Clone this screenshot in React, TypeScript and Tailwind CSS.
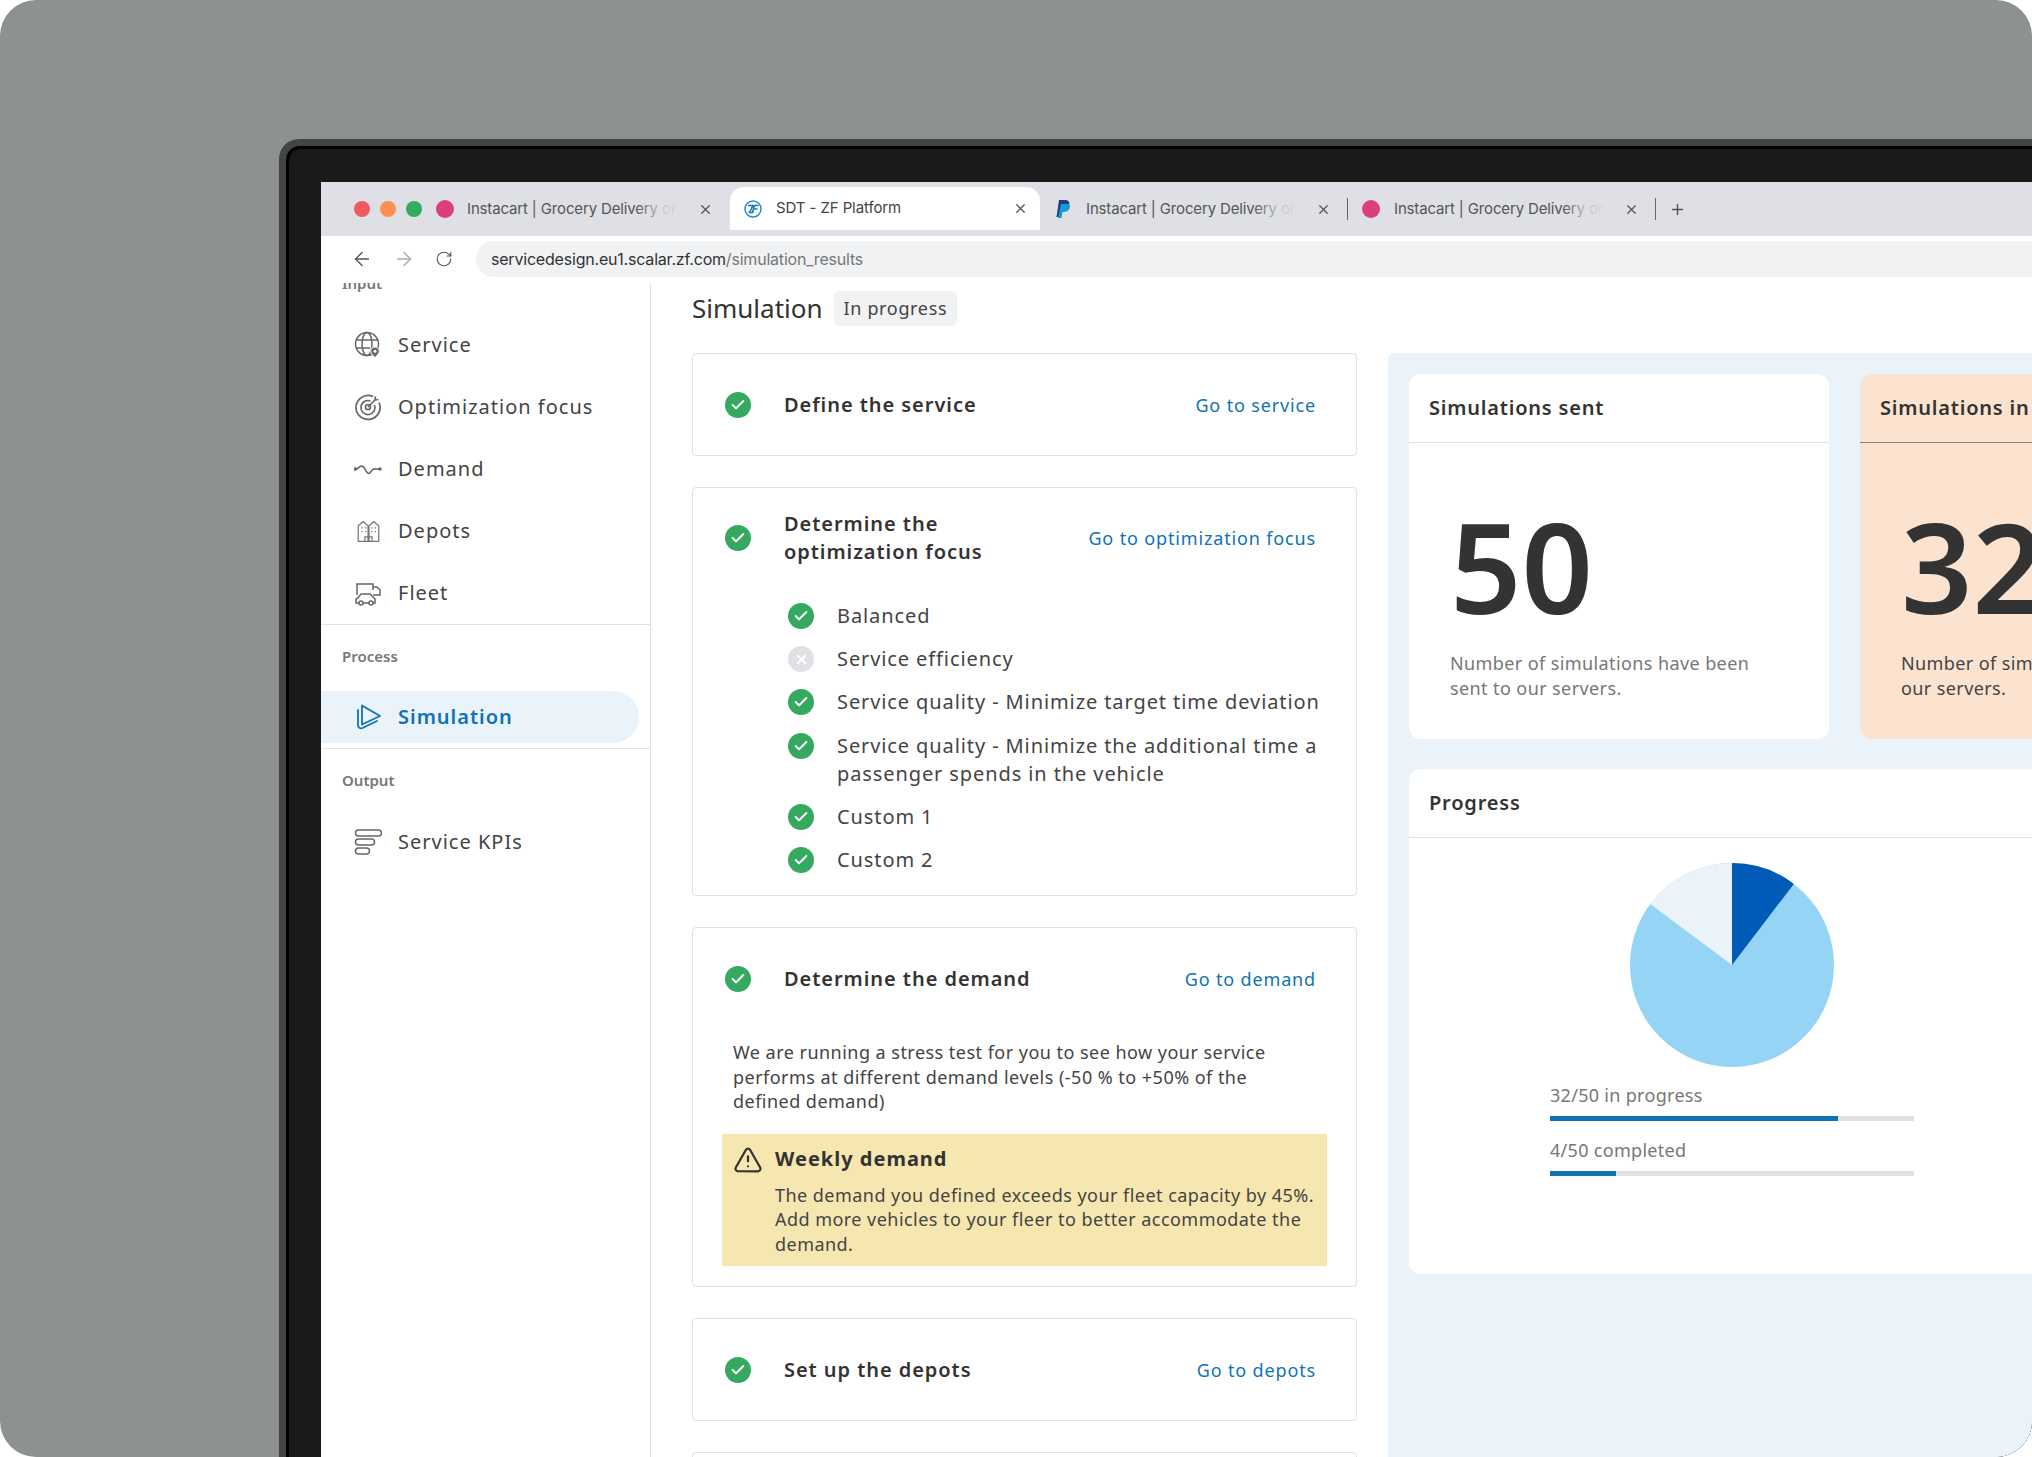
import React from "react";
import { X, Plus, ArrowLeft, ArrowRight, RotateCw, Check, TriangleAlert } from "lucide-react";

const Ok = () => (
  <span className="flex h-[26px] w-[26px] shrink-0 items-center justify-center rounded-full bg-[#35a95f]">
    <Check size={16} strokeWidth={3} className="text-white" />
  </span>
);
const No = () => (
  <span className="flex h-[26px] w-[26px] shrink-0 items-center justify-center rounded-full bg-[#dfe1e5]">
    <X size={15} strokeWidth={3} className="text-white" />
  </span>
);

const tabFont = { fontFamily: "Inter, sans-serif" };

const Tab = ({ icon }: { icon: React.ReactNode }) => (
  <div className="flex h-[44px] w-[308px] shrink-0 items-center">
    <span className="flex w-[24px] shrink-0 justify-center">{icon}</span>
    <span className="relative ml-[11px] w-[218px] overflow-hidden whitespace-nowrap text-[15px] tracking-[-0.15px] text-[#555]" style={tabFont}>
      Instacart | Grocery Delivery or in-store
      <span className="absolute inset-y-0 right-0 w-[50px] bg-gradient-to-r from-transparent via-[#dfe0e5cc] to-[#dfe0e5]" />
    </span>
    <X size={15} className="ml-[12px] shrink-0 text-[#555]" />
    <span className="ml-[16px] h-[22px] w-px shrink-0 bg-[#666]" />
  </div>
);

const Globe = () => (
  <svg width="28" height="28" viewBox="0 0 28 28" fill="none" stroke="#666" strokeWidth="1.5">
    <circle cx="13" cy="13" r="11.5" />
    <ellipse cx="13" cy="13" rx="5" ry="11.5" />
    <path d="M2 9h22M2 17h14" />
    <path d="M21 26.500c-3-2.600-4.300-4.600-4.300-6.300a4.300 4.300 0 0 1 8.600 0c0 1.700-1.300 3.700-4.300 6.300z" fill="#666" stroke="#fff" strokeWidth="1" />
    <circle cx="21" cy="20.300" r="1.500" fill="#fff" stroke="none" />
  </svg>
);
const Target = () => (
  <svg width="28" height="28" viewBox="0 0 28 28" fill="none" stroke="#666" strokeWidth="1.700">
    <path d="M19 3.500A12 12 0 1 0 25 9.500" />
    <path d="M16.500 8a7 7 0 1 0 4 4" />
    <circle cx="14" cy="14" r="2.500" />
    <path d="M14 14l7-7M21 7l.5-3.500M21 7l3.500-.5" />
  </svg>
);
const Wave = () => (
  <svg width="28" height="28" viewBox="0 0 28 28" fill="none" stroke="#666" strokeWidth="1.600">
    <path d="M1.500 14c3 0 4-3 6-3s3 2 4 4 2 3.500 3.500 3.500 2.500-4 4.500-4.500 4 .5 6.500 0" />
    <circle cx="1.500" cy="14" r="1" fill="#666" />
    <circle cx="26" cy="14" r="1" fill="#666" />
  </svg>
);
const Depot = () => (
  <svg width="25" height="25" viewBox="0 0 28 28" fill="none" stroke="#777" strokeWidth="1.400">
    <path d="M2.500 25V7.500L8 3l5.500 4.500V25M14.500 25V7.500L20 3l5.500 4.500V25M2 25h24" />
    <path d="M6 10h1.500M10 10h1.500M6 14h1.500M10 14h1.500M17 10h1.500M21 10h1.500M17 14h1.500M21 14h1.500M10 25v-5h8v5M14 20v5" />
  </svg>
);
const Truck = () => (
  <svg width="28" height="28" viewBox="0 0 28 28" fill="none" stroke="#666" strokeWidth="1.500">
    <path d="M3 16V5h16v6M19 8h4l3 3v5h-7" />
    <path d="M2 24v-4l2-1 3-4h9l4 4 1 1v4z" fill="#fff" />
    <circle cx="7" cy="24" r="2" fill="#fff" />
    <circle cx="17" cy="24" r="2" fill="#fff" />
  </svg>
);
const Play = () => (
  <svg width="28" height="28" viewBox="0 0 28 28" fill="none" stroke="#0f73b5" strokeWidth="1.800" strokeLinejoin="round" strokeLinecap="round">
    <path d="M8 2.500l18 10.500-18 8.500z" />
    <path d="M4 7v15c0 2.500 2 4 4.500 3l14.500-7" />
  </svg>
);
const Kpi = () => (
  <svg width="28" height="28" viewBox="0 0 28 28" fill="none" stroke="#666" strokeWidth="1.500">
    <rect x="1.500" y="2" width="26" height="6" rx="3" />
    <rect x="1.500" y="11" width="19" height="6" rx="3" />
    <rect x="1.500" y="20" width="14" height="6" rx="3" />
  </svg>
);

const NavItem = ({ icon, label }: { icon: React.ReactNode; label: string }) => (
  <div className="flex h-[62px] items-center pl-[33px]">
    <span className="flex w-[28px] shrink-0 justify-center">{icon}</span>
    <span className="ml-[16px] text-[20px] tracking-[1px] text-[#444]">{label}</span>
  </div>
);

const Card = ({ title, link, extra, cls }: { title: React.ReactNode; link: string; extra?: React.ReactNode; cls: string }) => (
  <div className={`rounded-[4px] border border-[#dfe1e5] pl-[32px] pr-[40px] ${cls}`}>
    <div className="flex items-center">
      <Ok />
      <div className="ml-[33px] text-[20px] font-semibold leading-[28px] tracking-[0.95px] text-[#333]">{title}</div>
      <a className="ml-auto whitespace-nowrap text-[18px] tracking-[0.85px] text-[#0f73b5]">{link}</a>
    </div>
    {extra}
  </div>
);

const Focus = ({ ok = true, children }: { ok?: boolean; children: React.ReactNode }) => (
  <div className="flex items-start gap-[23px] pl-[95px]">
    <span className="pt-[1px]">{ok ? <Ok /> : <No />}</span>
    <span className="text-[20px] leading-[28px] tracking-[0.9px] text-[#444]">{children}</span>
  </div>
);

const Stat = ({ title, num, desc, peach }: { title: string; num: string; desc: React.ReactNode; peach?: boolean }) => (
  <div className={`h-[365px] shrink-0 overflow-hidden rounded-[12px] ${peach ? "w-[500px] bg-[#fce3cf]" : "w-[420px] bg-white"}`}>
    <div className={`flex h-[69px] items-center border-b px-[20px] text-[20px] font-semibold tracking-[0.8px] text-[#333] ${peach ? "border-[#888]" : "border-[#dfe1e5]"}`}>
      {title}
    </div>
    <div className="pl-[41px] pt-[58px]">
      <div className="text-[125px] font-semibold leading-[130px] text-[#333]">{num}</div>
      <div className={`mt-[20px] text-[18px] leading-[24.500px] tracking-[0.4px] ${peach ? "text-[#444]" : "text-[#777]"}`}>{desc}</div>
    </div>
  </div>
);

const Bar = ({ label, pct, cls }: { label: string; pct: number; cls: string }) => (
  <div className={cls}>
    <div className="text-[18px] leading-[25px] tracking-[0.3px] text-[#777]">{label}</div>
    <div className="mt-[8px] h-[5px] w-[364px] bg-[#dfe1e5]">
      <div className="h-full bg-[#0f73b5]" style={{ width: `${pct}%` }} />
    </div>
  </div>
);

export default function App() {
  return (
    <div className="h-[1457px] w-[2032px] overflow-hidden bg-white" style={{ fontFamily: '"Noto Sans", sans-serif' }}>
      <div className="h-full w-full overflow-hidden rounded-[36px] bg-[#8e9191] pl-[279px] pt-[139px]">
        <div className="h-[1400px] w-[1800px] rounded-tl-[20px] bg-[#444] pl-[7px] pt-[7px]">
          <div className="h-full w-full rounded-tl-[14px] bg-black pl-[3px] pt-[3px]">
            <div className="h-full w-full rounded-tl-[12px] bg-[#1a1a1a] pl-[32px] pt-[33px]">
              <div className="h-full w-full bg-white">
                {/* tabs */}
                <div className="flex h-[54px] w-[1711px] items-start bg-[#dfe0e5] pl-[33px] pt-[5px]">
                  <div className="flex h-[44px] items-center gap-[10px]">
                    <span className="h-[16px] w-[16px] rounded-full bg-[#f0595f]" />
                    <span className="h-[16px] w-[16px] rounded-full bg-[#ff8f50]" />
                    <span className="h-[16px] w-[16px] rounded-full bg-[#33ac5f]" />
                  </div>
                  <div className="ml-[14px] w-[290px] shrink-0">
                    <div className="flex h-[44px] w-[285px] items-center">
                      <span className="h-[18px] w-[18px] shrink-0 rounded-full bg-[#dc3f7f]" />
                      <span className="relative ml-[13px] w-[219px] overflow-hidden whitespace-nowrap text-[15px] tracking-[-0.15px] text-[#555]" style={tabFont}>
                        Instacart | Grocery Delivery or in-store
                        <span className="absolute inset-y-0 right-0 w-[50px] bg-gradient-to-r from-transparent via-[#dfe0e5cc] to-[#dfe0e5]" />
                      </span>
                      <X size={15} className="ml-[12px] shrink-0 text-[#555]" />
                    </div>
                  </div>
                  <div className="ml-[4px] flex h-[43px] w-[310px] shrink-0 items-center rounded-t-[14px] bg-white pl-[14px]">
                    <svg width="18" height="18" viewBox="0 0 18 18" fill="none">
                      <circle cx="9" cy="9" r="8" stroke="#1c8fd0" strokeWidth="1.500" />
                      <path d="M4 5.500h5L5.500 12.500h4M10.500 5.500h4M10.500 9h3M9.500 12.500h-1L10.500 5.500" stroke="#1472b8" strokeWidth="1.500" />
                    </svg>
                    <span className="ml-[14px] text-[15px] tracking-[-0.1px] text-[#444]" style={tabFont}>SDT - ZF Platform</span>
                    <X size={15} className="ml-auto mr-[12px] text-[#555]" />
                  </div>
                  <div className="ml-[11px]">
                    <Tab icon={<svg width="16" height="20" viewBox="0 0 16 20"><path d="M4 1h6c4 0 5 2.500 4 5.500S10 11 7.500 11H6l-1 7H1.500z" fill="#253b80" /><path d="M6 5h6c3 0 3.500 2 2.500 4.500S11 13 8.500 13H7.500L6.500 19H3z" fill="#179bd7" /></svg>} />
                  </div>
                  <Tab icon={<span className="h-[18px] w-[18px] rounded-full bg-[#dc3f7f]" />} />
                  <Plus size={17} className="ml-[2px] mt-[14px] text-[#555]" />
                </div>
                {/* address */}
                <div className="flex h-[47px] w-[1711px] items-start pt-[5px]">
                  <div className="flex h-[36px] w-[155px] shrink-0 items-center">
                    <ArrowLeft size={22} strokeWidth={1.500} className="ml-[30px] text-[#555]" />
                    <ArrowRight size={22} strokeWidth={1.500} className="ml-[20px] text-[#aaa]" />
                    <RotateCw size={18} strokeWidth={1.500} className="ml-[20px] text-[#555]" />
                  </div>
                  <div className="flex h-[36px] flex-1 items-center rounded-l-[18px] bg-[#f1f2f4] pl-[15px] text-[16px] tracking-[-0.2px] text-[#333]" style={tabFont}>
                    servicedesign.eu1.scalar.zf.com<span className="text-[#777]">/simulation_results</span>
                  </div>
                </div>
                {/* page */}
                <div className="flex h-[1200px] w-[1711px]">
                  <aside className="h-full w-[330px] shrink-0 overflow-hidden border-r border-[#dfe1e5]">
                    <div className="-mt-[12px] h-[43px] pl-[21px] text-[15px] font-semibold leading-[24px] text-[#777]">Input</div>
                    <NavItem icon={<Globe />} label="Service" />
                    <NavItem icon={<Target />} label="Optimization focus" />
                    <NavItem icon={<Wave />} label="Demand" />
                    <NavItem icon={<Depot />} label="Depots" />
                    <NavItem icon={<Truck />} label="Fleet" />
                    <div className="h-[1px] bg-[#dfe1e5]" />
                    <div className="flex h-[66px] items-center pb-[4px] pl-[21px] text-[15px] font-semibold text-[#777]">Process</div>
                    <div className="flex h-[52px] w-[318px] items-center rounded-r-[26px] bg-[#eaf2fa] pl-[33px]">
                      <span className="flex w-[28px] justify-center"><Play /></span>
                      <span className="ml-[16px] text-[20px] font-semibold tracking-[1px] text-[#0f73b5]">Simulation</span>
                    </div>
                    <div className="mt-[5px] h-[1px] bg-[#dfe1e5]" />
                    <div className="flex h-[62px] items-center pl-[21px] text-[15px] font-semibold text-[#777]">Output</div>
                    <NavItem icon={<Kpi />} label="Service KPIs" />
                  </aside>
                  <main className="h-full w-[737px] shrink-0 overflow-hidden pl-[41px]">
                    <div className="flex h-[70px] items-start pt-[7px]">
                      <span className="text-[26px] leading-[36px] text-[#333]">Simulation</span>
                      <span className="ml-[11px] mt-[1px] flex h-[35px] items-center rounded-[6px] bg-[#f1f2f4] px-[10px] text-[18px] tracking-[0.65px] text-[#444]">In progress</span>
                    </div>
                    <div className="flex w-[665px] flex-col gap-[31px]">
                      <Card cls="h-[103px] pt-[37px]" title="Define the service" link="Go to service" />
                      <Card
                        cls="h-[409px] pt-[22px]"
                        title={<>Determine the<br />optimization focus</>}
                        link="Go to optimization focus"
                        extra={
                          <div className="-ml-[32px] -mr-[40px] mt-[36px] flex flex-col gap-[15.200px] pr-[20px]">
                            <Focus>Balanced</Focus>
                            <Focus ok={false}>Service efficiency</Focus>
                            <Focus>Service quality - Minimize target time deviation</Focus>
                            <Focus>Service quality - Minimize the additional time a passenger spends in the vehicle</Focus>
                            <Focus>Custom 1</Focus>
                            <Focus>Custom 2</Focus>
                          </div>
                        }
                      />
                      <Card
                        cls="h-[360px] pt-[37px]"
                        title="Determine the demand"
                        link="Go to demand"
                        extra={
                          <>
                            <p className="ml-[8px] mt-[47px] w-[560px] text-[18px] leading-[24.500px] tracking-[0.47px] text-[#444]">
                              We are running a stress test for you to see how your service performs at different demand levels (-50 % to +50% of the defined demand)
                            </p>
                            <div className="-ml-[3px] mt-[20px] flex h-[132px] w-[605px] gap-[12px] bg-[#f6e7b0] pl-[11px] pt-[10px]">
                              <TriangleAlert size={30} strokeWidth={1.800} className="mt-[1px] shrink-0 text-[#333]" />
                              <div className="min-w-0">
                                <div className="text-[20px] font-bold leading-[30px] tracking-[1px] text-[#333]">Weekly demand</div>
                                <p className="mt-[9px] w-[555px] text-[18px] leading-[24.500px] tracking-[0.46px] text-[#444]">
                                  The demand you defined exceeds your fleet capacity by 45%. Add more vehicles to your fleer to better accommodate the demand.
                                </p>
                              </div>
                            </div>
                          </>
                        }
                      />
                      <Card cls="h-[103px] pt-[37px]" title="Set up the depots" link="Go to depots" />
                      <div className="h-[60px] rounded-[4px] border border-[#dfe1e5]" />
                    </div>
                  </main>
                  <section className="mt-[70px] h-full flex-1 overflow-hidden rounded-tl-[6px] bg-[#eaf2fa] pl-[21px] pt-[21px]">
                    <div className="flex gap-[31px]">
                      <Stat title="Simulations sent" num="50" desc={<>Number of simulations have been<br />sent to our servers.</>} />
                      <Stat peach title="Simulations in progress" num="32" desc={<>Number of simulations sent to<br />our servers.</>} />
                    </div>
                    <div className="mt-[30px] h-[505px] w-[951px] overflow-hidden rounded-[12px] bg-white">
                      <div className="flex h-[69px] items-center border-b border-[#dfe1e5] px-[20px] text-[20px] font-semibold tracking-[0.8px] text-[#333]">Progress</div>
                      <div className="pl-[141px] pt-[25px]">
                        <svg width="204" height="204" viewBox="0 0 204 204" className="ml-[80px] block">
                          <circle cx="102" cy="102" r="102" fill="#96d4f5" />
                          <path d="M102 102V0A102 102 0 0 1 163.900 20.900z" fill="#005ab8" />
                          <path d="M102 102V0A102 102 0 0 0 20.200 41z" fill="#eaf2fa" />
                        </svg>
                        <Bar cls="mt-[16px]" label="32/50 in progress" pct={79} />
                        <Bar cls="mt-[17px]" label="4/50 completed" pct={18} />
                      </div>
                    </div>
                  </section>
                </div>
              </div>
            </div>
          </div>
        </div>
      </div>
    </div>
  );
}
